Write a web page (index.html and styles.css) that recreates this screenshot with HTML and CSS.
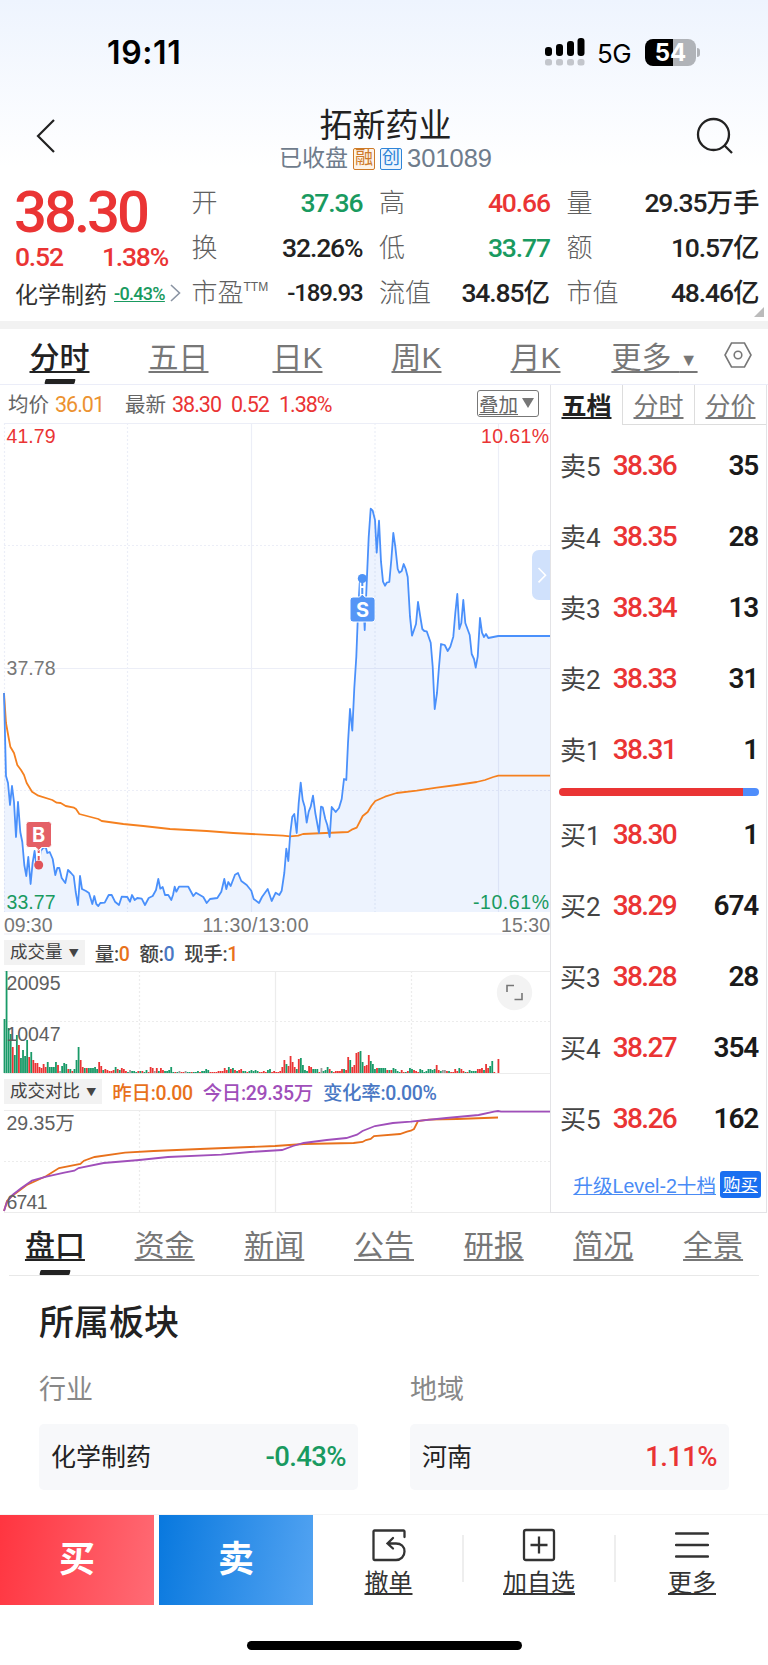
FILE: index.html
```html
<!DOCTYPE html>
<html lang="zh-CN">
    <head>
        <meta charset="UTF-8" />
        <meta name="viewport" content="width=device-width, initial-scale=1.0" />
        <title>拓新药业 301089</title>
        <link rel="stylesheet" href="styles.css">
    </head>
    <body>
        <header class="top">
            <div class="status">
                <span class="clock">19:11</span>
                <svg class="signal" width="40" height="28" viewBox="0 0 40 28">
                    <g fill="#000">
                        <rect x="0" y="9" width="7" height="9" rx="3" />
                        <rect x="11" y="6" width="7" height="12" rx="3" />
                        <rect x="22" y="3" width="7" height="15" rx="3" />
                        <rect x="32.500" y="0" width="7" height="18" rx="3" />
                    </g>
                    <g fill="#c3c6cc">
                        <rect x="0" y="21" width="7" height="6.500" rx="2.500" />
                        <rect x="11" y="21" width="7" height="6.500" rx="2.500" />
                        <rect x="22" y="21" width="7" height="6.500" rx="2.500" />
                        <rect x="32.500" y="21" width="7" height="6.500" rx="2.500" />
                    </g>
                </svg>
                <span class="net">5G</span>
                <span class="battery">54</span>
                <span class="battery-tip"></span>
            </div>
            <div class="title-bar">
                <svg class="back" width="22" height="36" viewBox="0 0 22 36"><path d="M19 2 3 18l16 16" fill="none" stroke="#222" stroke-width="2.200" /></svg>
                <div class="title">
                    <h1>拓新药业</h1>
                    <p>已收盘 <i class="tag orange">融</i><i class="tag blue">创</i><span class="code">301089</span></p>
                </div>
                <svg class="search" width="38" height="38" viewBox="0 0 38 38" fill="none" stroke="#222" stroke-width="2.300"><circle cx="17.500" cy="17.500" r="15.500" /><path d="m28 28 8 8" /></svg>
            </div>
        </header>

        <section class="quote">
            <div class="now">
                <div class="price num">38.30</div>
                <div class="change num"><span>0.52</span><span>1.38%</span></div>
                <div class="sector">化学制药<a class="num">-0.43%</a><svg width="11" height="18" viewBox="0 0 11 18"><path d="m1 1 8.500 8L1 17" fill="none" stroke="#8a94a3" stroke-width="1.600" /></svg></div>
            </div>
            <dl>
                <dt>开</dt><dd class="green">37.36</dd>
                <dt>换</dt><dd>32.26%</dd>
                <dt>市盈<sup>TTM</sup></dt><dd class="pe">-189.93</dd>
            </dl>
            <dl>
                <dt>高</dt><dd class="red">40.66</dd>
                <dt>低</dt><dd class="green">33.77</dd>
                <dt>流值</dt><dd>34.85<span>亿</span></dd>
            </dl>
            <dl>
                <dt>量</dt><dd>29.35<span>万手</span></dd>
                <dt>额</dt><dd>10.57<span>亿</span></dd>
                <dt>市值</dt><dd>48.46<span>亿</span></dd>
            </dl>
            <span class="corner"></span>
        </section>

        <nav class="periods">
            <a class="active">分时</a>
            <a>五日</a>
            <a>日K</a>
            <a>周K</a>
            <a>月K</a>
            <a>更多 <small>▼</small></a>
            <svg width="28" height="26" viewBox="0 0 28 26" fill="none" stroke="#777" stroke-width="1.600"><path d="M7.500 1h13L27 13l-6.500 12h-13L1 13z" /><circle cx="14" cy="13" r="3.800" /></svg>
        </nav>

        <main class="board">
            <div class="charts">
                <div class="legend">
                    <span>均价</span><b class="num avg">36.01</b>
                    <span class="latest">最新</span><b class="num red">38.30</b><b class="num red">0.52</b><b class="num red">1.38%</b>
                    <a class="overlay"><u>叠加</u><svg width="12" height="10" viewBox="0 0 12 10"><path d="M0 0h12L6 10z" fill="#777" /></svg></a>
                </div>

                <svg class="price-chart" width="550" height="512" viewBox="0 423 550 512">
                    <g class="grid">
                        <path d="M4 423.500H550M4 668.500H550M251.500 423V912M498.500 423V912M4 934H550" />
                        <path class="dots" d="M4 545.500H550M4 790.500H550M4.500 423V912M127.500 423V912M375 423V912" />
                    </g>
                    <path class="area" id="area" />
                    <polyline class="avg-line" points="4,693 6,723 8.700,738 10.300,746.700 14,753 17.300,765 21,770 24,775 26.700,783 32,791.700 38.300,795.700 52.300,800 56.700,802.700 60.700,803 65.700,806 74,807.700 76,809 79.300,814 98.300,819 101.700,821 123.300,824 143.300,826 170,829 206.700,831 233.300,833 283,835.700 290,836.300 298.300,835.700 303,834 348,832 351.700,829.700 356.700,827.700 362.700,816 367.700,812 371.300,806 375.300,801 385,796.700 396.700,793 416.700,790.700 436.700,787.700 456.700,785 476.700,782 485,780 493.300,777 498.300,775.700 550,775.700" />
                    <polyline class="price-line" id="price" points="4,693 6,776 8,783 10,805 12,786 14,802 16,837 18,802 20.300,832 22.300,842 24.300,865 26.300,876 28.300,857 30.600,884 32.600,863 34.600,851 36.700,868 38.700,866 40.700,851 43.300,848 45.700,847 47.300,853 49.700,852 52.700,859 55.300,875 57.300,868 59.300,868 61.700,878 65.300,883 68,870 71,873 73.700,876 75.700,892 78,905 80,876 82,889 86,891 89,893 92.300,904 94.300,896 96.300,904 98.300,906 100.300,903 104.700,902.700 108.700,895 111.700,895 115,901.700 119,905 121.700,896.700 127.300,897 130,901.700 132,895 134.700,900 137.300,898 141.700,898.700 145,905 148.700,898 152.700,896 156,890 158.300,879 160.300,888.700 162.700,887 165,895 168.300,895 171.300,900 173,895 174.700,886.700 176.300,891.700 179,886.700 188.300,886.700 193.300,896 196,892.700 203.300,897 206.700,903 210,899 217.300,898 221.300,891.700 224.300,879 226.300,889 228.300,882 230.700,886 235,874.700 238,873 241.300,881 246.700,885 251.300,890.700 253.700,899 259,903 262,897 267.700,889 271.700,901 275.700,892.700 279.300,895 281.700,890.700 284.300,873 286.300,848.700 288.300,861 290.300,833 292.300,816.700 294.300,814 296.700,833 298.700,803 300.700,782.700 302.700,800 304.700,806.700 306.700,822.700 308.700,811.700 310.700,806.700 313,795.700 315.300,813 319,833 321,806.700 322.700,807.300 325.300,819 327.300,825 329.700,837 331.700,807 335.700,812 339,808 341.700,799 344,779 346.300,780 348,743 350,709 352.300,730.700 354.300,688 356.300,657 358,613 359.700,583 362.300,577 364.700,630 366.700,583 368.700,537 370.700,508.700 372.700,510.700 375,520 376.700,552.700 379,520.700 381,561.700 383,581.700 385,585.700 386.700,582.700 389.300,582 391.300,560 393.300,533 395.300,546.700 397.700,569 399.300,572.700 401.700,571 403.700,564 405.700,569 407.700,577 410,616.700 412,635.700 414,630 416,624 418,602 420,615 422.300,629 424.300,631 426.700,631.300 428.700,637 430.700,642.700 432.700,666.700 434.700,709 437,693 439,666.700 441,644 444.700,645 447.700,651 450.300,646.700 453.300,636.700 455.300,613 457.300,594 459.300,629 461.300,623 463.300,600 465.300,623 469.700,635 471.700,654 474,659 475.700,667.700 477.700,656.700 480,618 482,632.700 484,637 486,634 488.300,638 493.300,637 498.300,636 550,636" />
                    <g class="mark">
                        <path d="M38.700 847v14" stroke="#fff" stroke-width="5" />
                        <path d="M38.700 849v14" stroke="#e0535a" stroke-width="2" stroke-dasharray="4 3" />
                        <circle cx="38.700" cy="865" r="4.500" fill="#e0535a" />
                        <path d="M29 821.500h19.500a3 3 0 0 1 3 3v20a3 3 0 0 1-3 3h-7l-2.800 3-2.800-3H29a3 3 0 0 1-3-3v-20a3 3 0 0 1 3-3z" fill="#e46066" stroke="#fff" />
                        <text x="38.700" y="842">B</text>
                    </g>
                    <g class="mark">
                        <path d="M362.300 580v16" stroke="#fff" stroke-width="5" />
                        <path d="M362.300 580v16" stroke="#4f93f5" stroke-width="2" stroke-dasharray="6 2" />
                        <circle cx="362.300" cy="578.500" r="4.500" fill="#4f93f5" />
                        <path d="M353 597h6.500l2.800-3 2.800 3h7a3 3 0 0 1 3 3v19a3 3 0 0 1-3 3H353a3 3 0 0 1-3-3v-19a3 3 0 0 1 3-3z" fill="#5596f6" stroke="#fff" />
                        <text x="362.500" y="616.500">S</text>
                    </g>
                    <g class="scale">
                        <text class="up" x="6.500" y="442.500" textLength="49">41.79</text>
                        <text class="up" x="481" y="442.500" textLength="68">10.61%</text>
                        <text x="6.500" y="675" textLength="49">37.78</text>
                        <text class="down" x="6.500" y="908.500" textLength="49">33.77</text>
                        <text class="down" x="473" y="908.500" textLength="76">-10.61%</text>
                        <text x="4" y="932" textLength="48.500">09:30</text>
                        <text x="202.500" y="932" textLength="106">11:30/13:00</text>
                        <text x="501" y="932" textLength="49">15:30</text>
                    </g>
                    <path d="M550 550h-11a7 7 0 0 0-7 7v36a7 7 0 0 0 7 7h11z" fill="#d0e1fc" />
                    <path d="m538.500 568 7 7.200-7 7.200" fill="none" stroke="#fff" stroke-width="1.600" />
                </svg>

                <div class="sub-head">
                    <a class="picker">成交量 <small>▼</small></a>
                    <span>量:<b class="c-orange">0</b></span>
                    <span>额:<b class="c-blue">0</b></span>
                    <span>现手:<b class="c-orange">1</b></span>
                </div>
                <svg class="volume" width="550" height="104" viewBox="0 971 550 104">
                    <g class="grid gray">
                        <path d="M4 971.500H550M275.500 971V1073M4 1073.500H550" />
                        <path class="dots" d="M4 1021.500H550M139.500 971V1073M411.500 971V1073" />
                    </g>
                    <g id="bars"></g>
                    <g class="scale dark">
                        <text x="6.500" y="990" textLength="54">20095</text>
                        <text x="6.500" y="1041" textLength="54">10047</text>
                    </g>
                    <circle cx="514.500" cy="992.500" r="17.700" fill="#f3f3f3" />
                    <path d="M507 992v-6.500h7M522 993v6.500h-7.500" fill="none" stroke="#777" stroke-width="1.600" />
                </svg>

                <div class="sub-head compare-head">
                    <a class="picker">成交对比 <small>▼</small></a>
                    <span class="c-orange">昨日:0.00</span>
                    <span class="c-purple">今日:29.35万</span>
                    <span class="c-blue">变化率:0.00%</span>
                </div>
                <svg class="compare" width="550" height="103" viewBox="0 1110 550 103">
                    <g class="grid gray">
                        <path d="M4 1110.500H550M275.500 1110V1212M4 1212.500H550" />
                        <path class="dots" d="M4 1161.500H550M139.500 1110V1212M411.500 1110V1212" />
                    </g>
                    <polyline stroke="#e8711c" points="4,1211 7,1201 12,1196 26.800,1185 46.400,1176 59,1168 80.400,1164 84,1160.700 94.600,1157 125,1152.700 153.600,1151 200,1149 275,1146 303.600,1144 353.600,1143 362.500,1142 366,1140 370.700,1139 374,1136 400,1134 407,1131.700 410.700,1130.700 414,1129 418,1121 428.600,1119.700 457,1119 498,1117.500" />
                    <polyline stroke="#a04fba" points="4,1211 7,1202 12.500,1195 21.400,1188 32,1180.700 46.400,1176.700 64.300,1172.700 74.300,1170.700 78.600,1168 103.600,1163 139.300,1160 167.900,1157 221.400,1154.700 250,1152 282,1150 293,1146 303.600,1143 326.800,1140 346.400,1138 357,1134.700 362.500,1131 375,1126 392.900,1123 410.700,1121.700 446.400,1118 478.600,1115 494,1111.700 498,1111 501,1111.700 550,1111.700" />
                    <g class="scale dark">
                        <text x="6.500" y="1130">29.35万</text>
                        <text x="6.500" y="1208.500" textLength="41">6741</text>
                    </g>
                </svg>
            </div>

            <aside class="book">
                <nav>
                    <a class="active">五档</a>
                    <a>分时</a>
                    <a>分价</a>
                </nav>
                <ul>
                    <li>卖5<b>38.36</b><em>35</em></li>
                    <li>卖4<b>38.35</b><em>28</em></li>
                    <li>卖3<b>38.34</b><em>13</em></li>
                    <li>卖2<b>38.33</b><em>31</em></li>
                    <li>卖1<b>38.31</b><em>1</em></li>
                </ul>
                <div class="ratio"></div>
                <ul>
                    <li>买1<b>38.30</b><em>1</em></li>
                    <li>买2<b>38.29</b><em>674</em></li>
                    <li>买3<b>38.28</b><em>28</em></li>
                    <li>买4<b>38.27</b><em>354</em></li>
                    <li>买5<b>38.26</b><em>162</em></li>
                </ul>
                <div class="upgrade"><a>升级Level-2十档</a><a class="buy-level">购买</a></div>
            </aside>
        </main>

        <nav class="sections">
            <a class="active">盘口</a>
            <a>资金</a>
            <a>新闻</a>
            <a>公告</a>
            <a>研报</a>
            <a>简况</a>
            <a>全景</a>
        </nav>

        <section class="plates">
            <h2>所属板块</h2>
            <div class="plate-grid">
                <div>
                    <h3>行业</h3>
                    <div class="plate"><span>化学制药</span><b class="green">-0.43%</b></div>
                </div>
                <div>
                    <h3>地域</h3>
                    <div class="plate"><span>河南</span><b class="red">1.11%</b></div>
                </div>
            </div>
        </section>

        <footer>
            <div class="actions">
                <a class="trade buy">买</a>
                <a class="trade sell">卖</a>
                <a class="tool">
                    <svg width="34" height="34" viewBox="0 0 34 34" fill="none" stroke="#333" stroke-width="2.300" stroke-linecap="round"><path d="M32.500 9V3.500a1 1 0 0 0-1-1h-29a1 1 0 0 0-1 1V31a1 1 0 0 0 1 1H24c4.800 0 8.500-3.500 8.500-8.500S29 15.500 24 15.500H15.500M21 10l-5.500 5.500L21 20.500" /></svg>
                    <span>撤单</span>
                </a>
                <a class="tool">
                    <svg width="34" height="34" viewBox="0 0 34 34" fill="none" stroke="#333" stroke-width="2.300"><rect x="2" y="2" width="30" height="30" rx="2" /><path d="M17 8.500v17M8.500 17h17" /></svg>
                    <span>加自选</span>
                </a>
                <a class="tool">
                    <svg width="34" height="34" viewBox="0 0 34 34" fill="none" stroke="#333" stroke-width="2.300" stroke-linecap="round"><path d="M1 5.500h32M1 17h32M1 28.500h32" /></svg>
                    <span>更多</span>
                </a>
            </div>
            <div class="home"></div>
        </footer>

        <script>
            // area under the price line
            const points = document.getElementById("price").getAttribute("points");
            document.getElementById("area").setAttribute("d", `M4 912L${points}L550 912Z`);

            // one bar per minute: g = down, r = up, y = flat
            const volume =
                "g54 g102 g45 g39 r26 g18 g38 r28 g15 g23 g17 g33 r16 g21 r13 r10 r10 r6 r5 r9 " +
                "r6 g11 g6 g6 g6 g11 r8 y2 g7 g10 g9 r4 g4 r2 g4 g13 g26 r13 r6 g5 " +
                "r5 g5 g5 g5 g6 g4 r11 r7 g3 r4 r3 r2 r2 r3 g6 r4 g3 r5 r4 r2 " +
                "g1 y3 g2 g2 g1 r2 g2 r2 g1 g3 r1 r6 r5 y2 r5 g2 r5 r3 g2 g2 " +
                "g3 g6 g1 r1 g1 y2 r1 r1 y2 g1 g1 r1 g1 g1 g2 r1 g2 g2 g4 g3 " +
                "r1 r1 r1 r1 r2 r2 r2 r5 r3 g6 r4 g5 r3 g2 r3 r4 g2 g2 r1 g2 " +
                "g3 g2 g3 g2 r1 r1 r2 r1 g3 g4 r1 r2 r1 r1 r2 r6 r13 g9 r7 r17 " +
                "r11 r6 g4 r14 g15 g8 g3 g2 r7 r6 g4 g4 g4 r1 y5 g2 g3 g6 r4 g2 " +
                "r1 r2 r2 r2 r4 g4 r3 r16 g13 r6 r8 r20 r21 g22 g11 r7 r8 r18 g12 g9 " +
                "g4 r5 g5 g5 g5 g5 r3 g3 r3 g5 g4 g2 g1 r3 r1 g1 r2 g5 g4 r3 " +
                "r2 r1 g4 g3 g1 g2 g4 g4 g3 g4 r8 r3 g2 y3 y3 r2 g2 r1 r1 r4 " +
                "r2 g5 r4 r2 g1 r1 g3 g2 g2 g2 r4 r4 r5 g3 r9 r5 g7 g12 r1 y0 r14";
            const fill = { g: "#199a68", r: "#ea3434", y: "#999" };
            document.getElementById("bars").innerHTML = volume
                .split(" ")
                .map((v, i) => {
                    const h = Number(v.slice(1));
                    return `<rect x="${(3.600 + i * 2.058).toFixed(2)}" y="${1073 - h}" width="1.800" height="${h}" fill="${fill[v[0]]}" />`;
                })
                .join("");
        </script>
    </body>
</html>
```
FILE: styles.css
```css
* {
    box-sizing: border-box;
    margin: 0;
    padding: 0;
}

body {
    width: 768px;
    height: 1665px;
    overflow: hidden;
    background: #fff;
    color: #222;
    font-family: "Liberation Sans", "Noto Sans CJK SC", sans-serif;
}

i, em {
    font-style: normal;
}

.num {
    font-family: Roboto, "Noto Sans CJK SC", sans-serif;
}

.red { color: #ea3434; }
.green { color: #199a60; }
.c-orange { color: #e8711c; }
.c-blue { color: #4a78c4; }
.c-purple { color: #a04fba; }

/* status bar + title */
.top {
    height: 182px;
    background: linear-gradient(#eef4fe, #fff 92%);
}

.status {
    display: flex;
    align-items: center;
    height: 104px;
    padding-left: 107px;
}

.clock {
    width: 438px;
    padding-top: 1px;
    font: 600 32px Inter, sans-serif;
    letter-spacing: 0.6px;
    color: #000;
}

.net {
    width: 47px;
    margin-left: 12px;
    padding-top: 2px;
    font: 400 26px Inter, sans-serif;
    letter-spacing: -0.5px;
    color: #000;
}

.battery {
    width: 51px;
    height: 27px;
    margin-left: 1px;
    border-radius: 8px;
    background: linear-gradient(90deg, #000 54%, #b0b3b8 54%);
    color: #fff;
    font: 700 24px/27px Inter, sans-serif;
    text-align: center;
}

.battery-tip {
    width: 3px;
    height: 9px;
    margin-left: 1px;
    border-radius: 0 4px 4px 0;
    background: #b0b3b8;
}

.title-bar {
    display: flex;
    justify-content: space-between;
    padding: 0 34px 0 35px;
}

.back { margin-top: 14px; }
.search { margin-top: 13px; }

.title {
    padding-left: 18px;
    text-align: center;
}

.title h1 {
    font-size: 33px;
    font-weight: 400;
    line-height: 43px;
}

.title p {
    display: flex;
    align-items: center;
    height: 23px;
    line-height: 23px;
    font-size: 23px;
    color: #6f7c8c;
}

.tag {
    width: 22px;
    height: 22px;
    margin-left: 5px;
    border: 1px solid;
    border-radius: 2px;
    font-size: 18px;
    line-height: 19px;
    text-align: center;
}

.tag.orange { color: #cd7a28; background: #fdf3e8; }
.tag.blue { color: #2e84d8; background: #edf5fd; }

.code {
    margin-left: 5px;
    font-size: 25.5px;
}

/* quote block */
.quote {
    position: relative;
    display: grid;
    grid-template-columns: 159px 171px 171px 193px;
    column-gap: 16.5px;
    height: 147px;
    padding-left: 16px;
    border-bottom: 8px solid #f2f2f2;
}

.now {
    color: #ea3434;
    white-space: nowrap;
}

.price {
    height: 60px;
    margin-left: -2px;
    font-size: 58px;
    font-weight: 500;
    line-height: 60px;
    letter-spacing: -3px;
}

.change {
    display: flex;
    justify-content: space-between;
    width: 153px;
    height: 30px;
    margin-left: -1px;
    font-size: 26.5px;
    line-height: 30px;
    letter-spacing: -1.2px;
    font-weight: 500;
}

.sector {
    display: flex;
    align-items: center;
    height: 41px;
    margin-left: -1px;
    color: #333;
    font-size: 23px;
}

.sector svg { flex: none; }

.sector a {
    margin: 2px 5px 0 7px;
    color: #199a60;
    font-size: 18px;
    font-weight: 500;
    letter-spacing: -0.7px;
    text-decoration: underline;
}

.quote dl {
    display: grid;
    grid-template-columns: auto 1fr;
    grid-auto-rows: 45px;
    line-height: 42px;
}

.quote dt {
    font-size: 26px;
    font-weight: 300;
    color: #606060;
    white-space: nowrap;
}

.quote dt sup {
    font-size: 12px;
    line-height: 0;
    vertical-align: 11px;
}

.quote dd {
    font: 500 26.500px/42px Roboto, "Noto Sans CJK SC", sans-serif;
    letter-spacing: -1.1px;
    text-align: right;
    white-space: nowrap;
}

.quote dd span { letter-spacing: 0; }
.quote dd.pe { font-size: 24px; }
.quote dd.red { color: #ea3434; }
.quote dd.green { color: #199a60; }

.corner {
    position: absolute;
    right: 4px;
    bottom: 4px;
    border: 5px solid;
    border-color: transparent #bbb #bbb transparent;
}

/* period tabs */
.periods {
    display: grid;
    grid-template-columns: repeat(6, 119px) 48px;
    justify-items: center;
    height: 56px;
    border-bottom: 1px solid #ebedf8;
}

.periods a, .sections a {
    position: relative;
    height: 55px;
    font-size: 30px;
    line-height: 57px;
    color: #777;
    text-decoration: underline;
    text-decoration-thickness: 2px;
    text-underline-offset: 3px;
    white-space: nowrap;
}

.periods svg { margin-top: 13px; }

.periods small {
    font-size: 18px;
    vertical-align: 2px;
}

.periods .active, .sections .active {
    color: #222;
    font-weight: 500;
}

.periods .active::after, .sections .active::after {
    content: "";
    position: absolute;
    left: 15px;
    bottom: 0;
    width: 30px;
    height: 5px;
    border-radius: 1px;
    background: #222;
    transform: skewX(-14deg);
}

/* charts + order book */
.board {
    display: flex;
    height: 828px;
}

.charts {
    width: 550px;
}

.charts svg { display: block; }

.legend {
    display: flex;
    align-items: center;
    height: 38px;
    padding: 0 11px 2px 8px;
    font-size: 20.5px;
    color: #666;
}

.legend b {
    margin: 2px 10px 0 6px;
    font-size: 21.5px;
    font-weight: 400;
    letter-spacing: -1px;
}

.legend b + b { margin-left: 0; }
.legend .avg { color: #ec9230; }
.latest { margin-left: 11px; }

.overlay {
    display: flex;
    align-items: center;
    gap: 4px;
    height: 27px;
    margin-left: auto;
    padding: 0 4px 0 1px;
    border: 1px solid #777;
    border-radius: 3px;
    font-size: 19.500px;
    text-underline-offset: 2px;
}

.grid { fill: none; stroke: #eceef7; stroke-width: 1.2; }
.grid.gray { stroke: #ececec; }
.dots { stroke-dasharray: 2 2; }
.area { fill: #4a8cf5; fill-opacity: 0.1; }
.price-line { fill: none; stroke: #4a90fb; stroke-width: 1.8; stroke-linejoin: round; }
.avg-line { fill: none; stroke: #f5801f; stroke-width: 1.8; stroke-linejoin: round; }
.compare polyline { fill: none; stroke-width: 1.8; }

.mark text {
    fill: #fff;
    font: 700 20px Inter, sans-serif;
    text-anchor: middle;
}

.scale text { font-size: 19.5px; fill: #777; }
.scale .up { fill: #ea3434; }
.scale .down { fill: #199a60; }
.scale.dark text { fill: #606060; }

.sub-head {
    display: flex;
    align-items: center;
    gap: 10px;
    height: 36px;
    padding: 0 0 1px 4px;
    font: 500 19.500px Roboto, "Noto Sans CJK SC", sans-serif;
    letter-spacing: -0.35px;
    color: #444;
    white-space: nowrap;
}

.sub-head b { font-weight: 500; }

.picker {
    height: 25px;
    padding: 0 6px 0 6px;
    background: #f2f2f2;
    color: #444;
    font-size: 17.5px;
    font-weight: 400;
    line-height: 25px;
    letter-spacing: 0;
}

.picker small {
    margin-left: 2px;
    font-size: 10px;
    vertical-align: 1px;
}

.compare-head {
    height: 35px;
    padding-bottom: 2px;
}

.book {
    width: 217px;
    border: 1px solid #e3e3e6;
    border-top: 0;
}

.book nav {
    display: grid;
    grid-template-columns: 71px 72px 72px;
    height: 45px;
}

.book nav a {
    height: 40px;
    border: 1px solid #ddd;
    border-width: 0 0 1px 1px;
    color: #777;
    font-size: 25px;
    line-height: 42px;
    text-align: center;
    text-decoration: underline;
    text-underline-offset: 2px;
}

.book nav .active {
    border: 0;
    color: #222;
    font-weight: 700;
}

.book ul { list-style: none; }

.book li {
    display: flex;
    align-items: center;
    height: 71px;
    padding: 0 8px 2px 9px;
    font: 400 26px Roboto, "Noto Sans CJK SC", sans-serif;
    color: #444;
}

.book li b {
    margin: 2px 0 0 12px;
    font-size: 28px;
    font-weight: 500;
    color: #ea3434;
    letter-spacing: -1.6px;
}

.book li em {
    margin: 2px 0 0 auto;
    font-size: 28px;
    font-weight: 600;
    color: #1a1a1a;
    letter-spacing: -1.2px;
}

.ratio {
    height: 8px;
    margin: 3px 7px 3px 8px;
    border-radius: 4px;
    background: linear-gradient(90deg, #ea3434 92%, #4f8dfb 92%);
}

.upgrade {
    display: flex;
    align-items: center;
    justify-content: flex-end;
    gap: 4px;
    height: 61px;
    padding-right: 5px;
    font-size: 19.6px;
    color: #4a8bf5;
}

.upgrade a { text-decoration: underline; }

.buy-level {
    height: 27px;
    padding: 0 3px;
    border-radius: 3px;
    background: #1a6ff0;
    color: #fff;
    font-size: 17.5px;
    line-height: 29px;
}

/* section tabs */
.sections {
    display: grid;
    grid-template-columns: repeat(7, 109.7px);
    justify-content: center;
    justify-items: center;
    height: 63px;
    margin: 0 9px;
    border-bottom: 1px solid #e8e8e8;
}

.sections a {
    height: 62px;
    line-height: 65px;
}

.plates { padding: 22px 39px 0; }

.plates h2 {
    font-size: 35px;
    font-weight: 500;
    line-height: 50px;
}

.plate-grid {
    display: grid;
    grid-template-columns: 319px 319px;
    column-gap: 52px;
}

.plates h3 {
    height: 76px;
    padding-top: 22px;
    font-size: 27px;
    font-weight: 400;
    line-height: 40px;
    color: #888;
}

.plate {
    display: flex;
    align-items: center;
    justify-content: space-between;
    height: 66px;
    padding: 0 12px;
    border-radius: 5px;
    background: #f7f8fa;
    font-size: 25px;
}

.plate span { margin-top: -4px; }

.plate b {
    margin-top: -1px;
    font: 500 27.5px Roboto, sans-serif;
    letter-spacing: -0.6px;
}

/* bottom bar */
footer {
    height: 150px;
    margin-top: 24px;
    border-top: 1px solid #f4f4f4;
}

.actions {
    display: grid;
    grid-template-columns: 154px 159px 149px 152px 154px;
    height: 88px;
}

.trade {
    color: #fff;
    font-size: 36px;
    font-weight: 700;
    line-height: 90px;
    text-align: center;
}

.buy { background: linear-gradient(100deg, #ff3540, #ff6b75); }
.sell { margin-left: 5px; background: linear-gradient(100deg, #0878de, #54a4f2); }

.tool {
    display: flex;
    flex-direction: column;
    align-items: center;
    padding: 13px 0 0 2px;
    font-size: 24px;
    line-height: 41px;
    color: #333;
    text-decoration: underline;
    text-underline-offset: 2px;
}

.tool + .tool {
    background: linear-gradient(#eee, #eee) no-repeat 0 20px / 2px 47px;
}

.home {
    width: 275px;
    height: 9px;
    margin: 38px auto 0;
    border-radius: 5px;
    background: #000;
}
```
